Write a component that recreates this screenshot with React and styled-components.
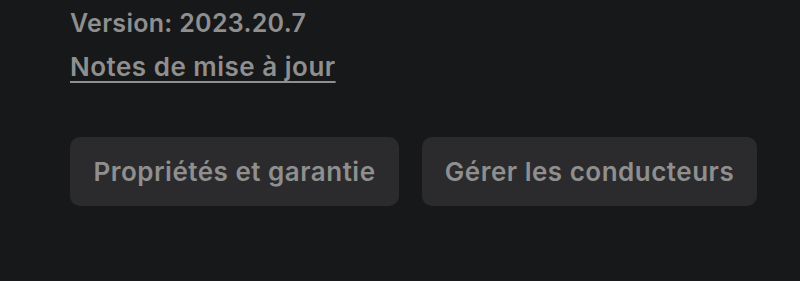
import React from 'react';
import styled, { createGlobalStyle } from 'styled-components';

const GlobalStyle = createGlobalStyle`
  html, body {
    margin: 0;
    padding: 0;
    background-color: #17181a;
  }
  body {
    font-family: Inter, 'Noto Sans', sans-serif;
  }
`;

const Page = styled.div`
  width: 800px;
  height: 281px;
  box-sizing: border-box;
  padding: 8px 0 0 70px;
  background-color: #17181a;
  display: flex;
  flex-direction: column;
`;

const Version = styled.div`
  font-size: 25px;
  line-height: 30px;
  font-weight: 600;
  letter-spacing: 0.3px;
  color: #8f8f8f;
`;

const Notes = styled.a`
  margin-top: 14px;
  align-self: flex-start;
  font-size: 26px;
  line-height: 30px;
  font-weight: 600;
  letter-spacing: 0.5px;
  color: #8f8f8f;
  text-decoration: underline;
  text-underline-offset: 5px;
  text-decoration-thickness: 2px;
  cursor: pointer;
`;

const Actions = styled.div`
  display: flex;
  gap: 23px;
  margin-top: 55px;
`;

const Button = styled.button`
  width: ${(p) => p.$width}px;
  height: 69px;
  padding: 0;
  border: none;
  border-radius: 10px;
  background-color: #2b2b2d;
  color: #8f8f8f;
  font-family: Inter, 'Noto Sans', sans-serif;
  font-size: 26px;
  font-weight: 600;
  letter-spacing: 0.5px;
  cursor: pointer;
`;

function App() {
  return (
    <>
      <GlobalStyle />
      <Page>
        <Version>Version: 2023.20.7</Version>
        <Notes>Notes de mise à jour</Notes>
        <Actions>
          <Button $width={329}>Propriétés et garantie</Button>
          <Button $width={335}>Gérer les conducteurs</Button>
        </Actions>
      </Page>
    </>
  );
}

export default App;
